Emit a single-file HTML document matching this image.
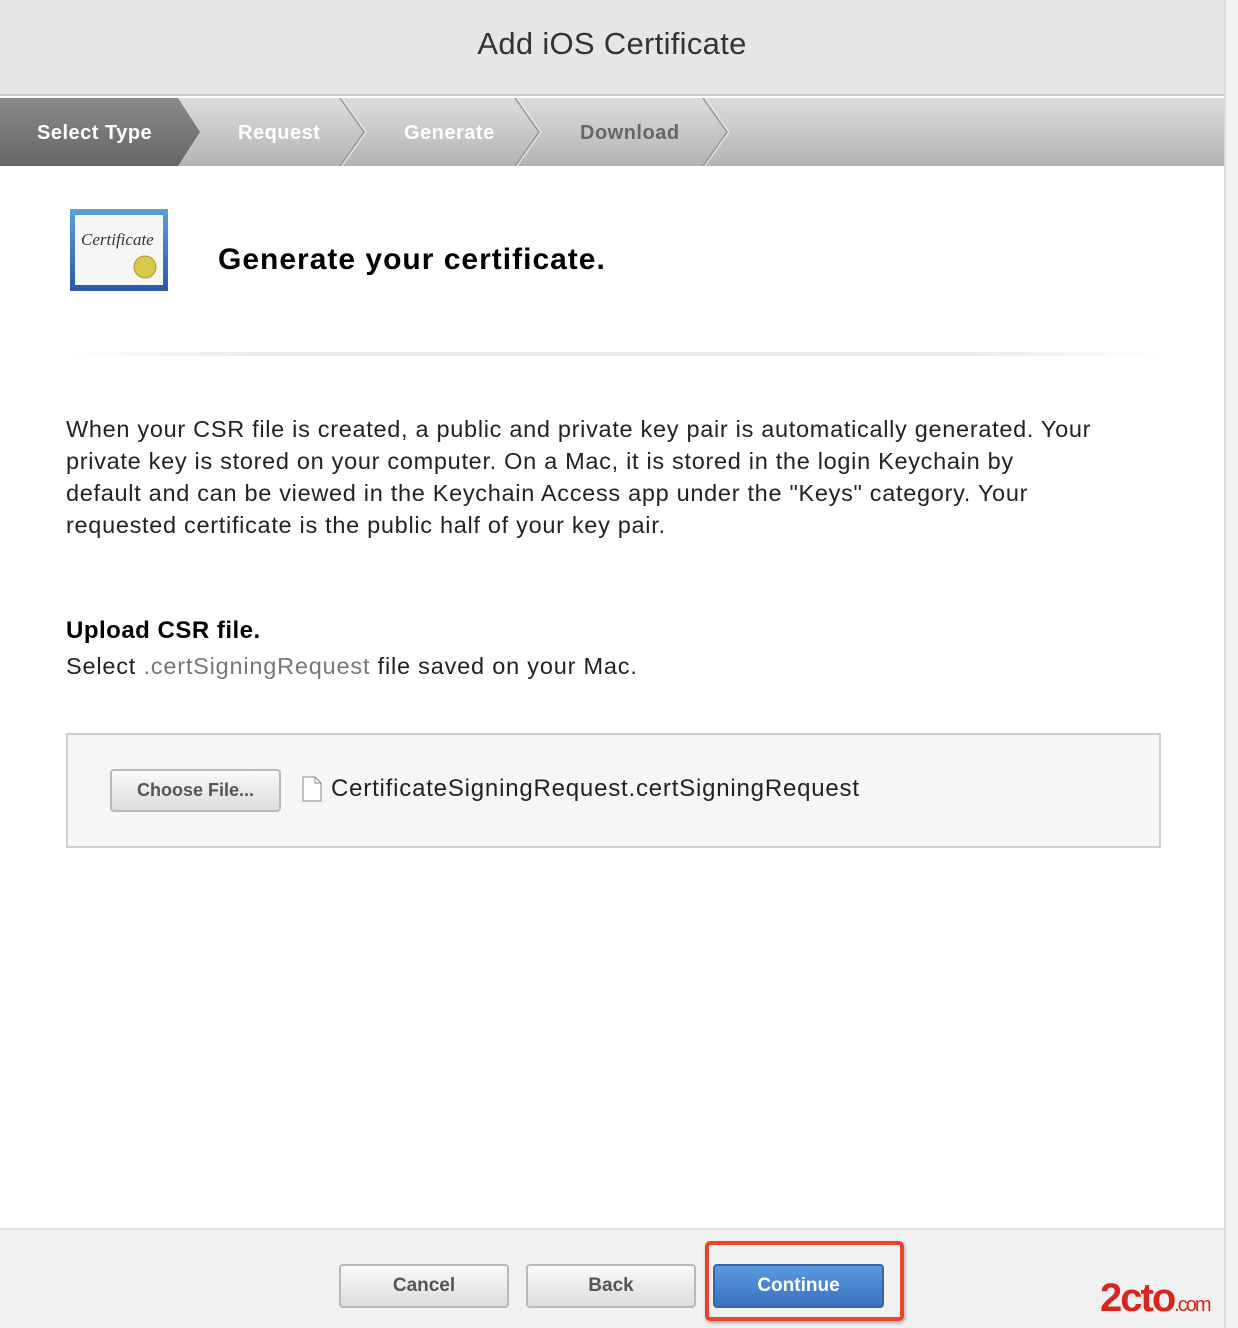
<!DOCTYPE html>
<html><head><meta charset="utf-8"><style>
*{margin:0;padding:0;box-sizing:border-box}
body{width:1238px;height:1328px;background:#fff;font-family:"Liberation Sans","DejaVu Sans",sans-serif;position:relative;overflow:hidden}
.rs{position:absolute;left:1224px;top:0;width:14px;height:1328px;background:#f2f2f2;border-left:2px solid #dcdcdc}
.top{position:absolute;left:0;top:0;width:1224px;height:96px;background:#e6e6e6;border-bottom:2px solid #c8c8c8;text-align:center;font-size:31px;line-height:88px;color:#333;letter-spacing:0.3px}
.steps{position:absolute;left:0;top:98px;width:1224px;height:68px;background:linear-gradient(#dcdcdc,#b4b4b4)}
.st{position:absolute;top:0;height:70px;line-height:70px;font-weight:bold;font-size:20px;color:#fff;letter-spacing:0.5px}
.title{position:absolute;left:218px;top:243px;font-size:30px;font-weight:bold;color:#000;letter-spacing:1px}
.hr{position:absolute;left:66px;top:352px;width:1094px;height:4px;background:linear-gradient(90deg,#fff,#e8e8e8 20%,#e8e8e8 80%,#fff)}
.p{position:absolute;left:66px;top:413px;width:1140px;font-size:23.5px;line-height:32px;color:#222;letter-spacing:0.7px;white-space:nowrap}
.h{position:absolute;left:66px;top:617px;font-size:24px;font-weight:bold;color:#000;letter-spacing:0.5px}
.s{position:absolute;left:66px;top:653px;font-size:23.5px;color:#222;letter-spacing:0.8px}
.box{position:absolute;left:66px;top:733px;width:1095px;height:115px;background:#f5f6f5;border:2px solid #cfcfcf}
.btn{position:absolute;border:2px solid #b9b9b9;border-radius:4px;background:linear-gradient(#fafafa,#dcdcdc);color:#555;font-weight:bold;text-align:center}
.foot{position:absolute;left:0;top:1228px;width:1224px;height:100px;background:#f1f1f1;border-top:2px solid #e2e2e2}
</style></head><body>
<div class="rs"></div>
<div class="top">Add iOS Certificate</div>
<div class="steps">
<svg width="760" height="68" style="position:absolute;left:0;top:0">
<defs><linearGradient id="g" x1="0" y1="0" x2="0" y2="1"><stop offset="0" stop-color="#8a8a8a"/><stop offset="1" stop-color="#666"/></linearGradient></defs>
<polygon points="0,0 178,0 200,34 178,68 0,68" fill="url(#g)"/>
<polyline points="340,0 364,34 340,68" fill="none" stroke="#999" stroke-width="1.5"/>
<polyline points="342,0 366,34 342,68" fill="none" stroke="#eee" stroke-width="1"/>
<polyline points="515,0 539,34 515,68" fill="none" stroke="#999" stroke-width="1.5"/>
<polyline points="517,0 541,34 517,68" fill="none" stroke="#eee" stroke-width="1"/>
<polyline points="703,0 727,34 703,68" fill="none" stroke="#999" stroke-width="1.5"/>
<polyline points="705,0 729,34 705,68" fill="none" stroke="#eee" stroke-width="1"/>
</svg>
<div class="st" style="left:37px">Select Type</div>
<div class="st" style="left:238px">Request</div>
<div class="st" style="left:404px">Generate</div>
<div class="st" style="left:580px;color:#666">Download</div>
</div>
<svg width="98" height="82" style="position:absolute;left:70px;top:209px">
<defs><linearGradient id="b" x1="0" y1="0" x2="0" y2="1"><stop offset="0" stop-color="#5aa0dc"/><stop offset="1" stop-color="#2a58a8"/></linearGradient></defs>
<rect x="0" y="0" width="98" height="82" fill="url(#b)"/>
<rect x="5" y="6" width="88" height="70" fill="#f6f6f6"/>
<text x="11" y="36" font-family="Liberation Serif" font-style="italic" font-size="17" fill="#333">Certificate</text>
<circle cx="75" cy="58" r="11" fill="#d9c84a" stroke="#a89a2a"/>
</svg>
<div class="title">Generate your certificate.</div>
<div class="hr"></div>
<div class="p">When your CSR file is created, a public and private key pair is automatically generated. Your<br>private key is stored on your computer. On a Mac, it is stored in the login Keychain by<br>default and can be viewed in the Keychain Access app under the "Keys" category. Your<br>requested certificate is the public half of your key pair.</div>
<div class="h">Upload CSR file.</div>
<div class="s">Select <span style="color:#777">.certSigningRequest</span> file saved on your Mac.</div>
<div class="box">
<div class="btn" style="left:42px;top:34px;width:171px;height:43px;line-height:39px;font-size:18px">Choose File...</div>
<svg width="20" height="26" style="position:absolute;left:234px;top:41px"><path d="M1 1H13L19 7V25H1Z" fill="#fff" stroke="#888"/><path d="M13 1V7H19" fill="none" stroke="#888"/></svg>
<div style="position:absolute;left:263px;top:40px;font-size:24px;color:#222;letter-spacing:0.8px">CertificateSigningRequest.certSigningRequest</div>
</div>
<div class="foot">
<div class="btn" style="left:339px;top:34px;width:170px;height:44px;line-height:40px;font-size:19px">Cancel</div>
<div class="btn" style="left:526px;top:34px;width:170px;height:44px;line-height:40px;font-size:19px">Back</div>
<div class="btn" style="left:713px;top:34px;width:171px;height:44px;line-height:40px;font-size:19px;background:linear-gradient(#5b9ae0,#3a72c0);border-color:#3566a8;color:#fff">Continue</div>
<div style="position:absolute;left:705px;top:11px;width:199px;height:80px;border:4px solid #e8442a;border-radius:5px;box-shadow:1px 2px 3px rgba(0,0,0,.3)"></div>
<div style="position:absolute;left:1100px;top:46px;font-size:40px;font-weight:bold;color:#d9261c;letter-spacing:-2px">2cto<span style="font-size:20px;font-weight:normal">.com</span></div>
</div>
</body></html>
